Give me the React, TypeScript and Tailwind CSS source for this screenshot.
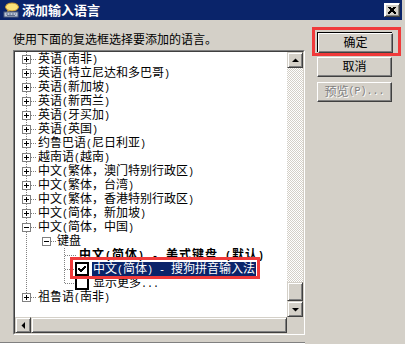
import type { ReactNode } from "react"

type Row = {
  text: string
  kind: "l1" | "l1open" | "l1last" | "l2open" | "l3bold" | "l3check"
  checked?: boolean
  selected?: boolean
  last3?: boolean
}

const rows: Row[] = [
  { text: "英语(南非)", kind: "l1" },
  { text: "英语(特立尼达和多巴哥)", kind: "l1" },
  { text: "英语(新加坡)", kind: "l1" },
  { text: "英语(新西兰)", kind: "l1" },
  { text: "英语(牙买加)", kind: "l1" },
  { text: "英语(英国)", kind: "l1" },
  { text: "约鲁巴语(尼日利亚)", kind: "l1" },
  { text: "越南语(越南)", kind: "l1" },
  { text: "中文(繁体，澳门特别行政区)", kind: "l1" },
  { text: "中文(繁体，台湾)", kind: "l1" },
  { text: "中文(繁体，香港特别行政区)", kind: "l1" },
  { text: "中文(简体，新加坡)", kind: "l1" },
  { text: "中文(简体，中国)", kind: "l1open" },
  { text: "键盘", kind: "l2open" },
  { text: "中文(简体) - 美式键盘 (默认)", kind: "l3bold" },
  { text: "中文(简体) - 搜狗拼音输入法", kind: "l3check", checked: true, selected: true },
  { text: "显示更多...", kind: "l3check", checked: false, last3: true },
  { text: "祖鲁语(南非)", kind: "l1last" },
]

// x positions inside the tree area (tree starts at page x=15)
const L1 = 11.5
const L2 = 31.5
const L3 = 49.5

// ASCII runs are set in a 6px-wide mono face, like the half-width bitmap font of the dialog
function Half({ text }: { text: string }) {
  const parts = text.match(/[\x20-\x7e]+|[^\x20-\x7e]+/g) ?? []
  return (
    <>
      {parts.map((p, i) =>
        /^[\x20-\x7e]/.test(p) ? (
          <span key={i} className="font-['Liberation_Mono',monospace] text-[10px] whitespace-pre">
            {p}
          </span>
        ) : (
          <span key={i}>{p}</span>
        ),
      )}
    </>
  )
}

function Box({ cx, open }: { cx: number; open: boolean }) {
  return (
    <g>
      <rect x={cx - 4} y={3.5} width={8} height={8} fill="#fff" stroke="#808080" />
      <line x1={cx - 2.5} y1={7.5} x2={cx + 2.5} y2={7.5} stroke="#000" />
      {!open && <line x1={cx} y1={5} x2={cx} y2={10} stroke="#000" />}
    </g>
  )
}

function Dots({ x1, y1, x2, y2 }: { x1: number; y1: number; x2: number; y2: number }) {
  return <line x1={x1} y1={y1} x2={x2} y2={y2} stroke="#808080" strokeDasharray="1 1" />
}

function CheckBox({ checked }: { checked: boolean }) {
  return (
    <g>
      <rect x={61} y={1} width={12} height={12} fill="#fff" stroke="#000" strokeWidth={2} />
      {checked && <path d="M63.5 6.5 L66 9 L70.5 4.5" fill="none" stroke="#000" strokeWidth={1.8} />}
    </g>
  )
}

function Gutter({ row }: { row: Row }) {
  let width = 23
  const parts: ReactNode[] = []
  const vEnd = row.kind === "l1last" ? 8 : 14
  parts.push(<Dots key="v1" x1={L1} y1={0} x2={L1} y2={vEnd} />)
  if (row.kind === "l1" || row.kind === "l1open" || row.kind === "l1last") {
    parts.push(<Dots key="h1" x1={16} y1={7.5} x2={21} y2={7.5} />)
    parts.push(<Box key="b1" cx={L1} open={row.kind === "l1open"} />)
  }
  if (row.kind === "l2open") {
    width = 42
    parts.push(<Dots key="h2" x1={36} y1={7.5} x2={41} y2={7.5} />)
    parts.push(<Box key="b2" cx={L2} open />)
  }
  if (row.kind === "l3bold" || row.kind === "l3check") {
    parts.push(<Dots key="v3" x1={L3} y1={0} x2={L3} y2={row.last3 ? 8 : 14} />)
    if (row.kind === "l3bold") {
      width = 64
      parts.push(<Dots key="h3" x1={50} y1={7.5} x2={61} y2={7.5} />)
    } else {
      width = 78
      parts.push(<Dots key="h3" x1={50} y1={7.5} x2={59} y2={7.5} />)
      parts.push(<CheckBox key="cb" checked={!!row.checked} />)
    }
  }
  return (
    <svg width={width} height={14} className="shrink-0" shapeRendering="crispEdges">
      {parts}
    </svg>
  )
}

function Arrow({ dir }: { dir: "up" | "down" | "left" }) {
  const d =
    dir === "up" ? "M4 9 L11 9 L7.5 5.5 Z" : dir === "down" ? "M4 6 L11 6 L7.5 9.5 Z" : "M9 4 L9 11 L5.5 7.5 Z"
  return (
    <svg width={14} height={14}>
      <path d={d} fill="#000" />
    </svg>
  )
}

const raised =
  "border border-t-[#d4d0c8] border-l-[#d4d0c8] border-r-[#404040] border-b-[#404040] shadow-[inset_1px_1px_#fff,inset_-1px_-1px_#808080] bg-[#d4d0c8]"

const button =
  "w-[75px] h-[20px] flex items-center justify-center text-[12px] leading-none border border-t-white border-l-white border-r-[#404040] border-b-[#404040] shadow-[inset_-1px_-1px_#808080] bg-[#d4d0c8]"

export default function App() {
  return (
    <div className="w-[405px] h-[344px] bg-[#d4d0c8] overflow-hidden relative font-['Liberation_Sans','Noto_Sans_CJK_SC',sans-serif] text-black">
      {/* title bar */}
      <div className="w-[402px] h-[20px] bg-[#0a246a] flex items-center">
        <svg width={16} height={16} className="ml-[3px]" viewBox="0 0 16 16">
          <ellipse cx={9} cy={5} rx={6.5} ry={4} fill="#fbe27a" stroke="#c8962a" />
          <path d="M5 8 L4 10 L7 9 Z" fill="#fbe27a" stroke="#c8962a" strokeWidth={0.6} />
          <rect x={1} y={10} width={14} height={5} fill="#b9c4d6" stroke="#4a5a7a" />
          <path d="M3 12h2M6 12h2M9 12h2M12 12h1M4 13.5h8" stroke="#4a5a7a" strokeWidth={0.8} />
        </svg>
        <span className="ml-[3px] text-white font-bold text-[13px] leading-none">添加输入语言</span>
        <div className={`ml-auto mr-[2px] w-[16px] h-[14px] flex items-center justify-center ${raised} border-t-white border-l-white`}>
          <svg width={8} height={7} shapeRendering="crispEdges">
            <path d="M0.5 0 L7.5 7 M1.5 0 L8.5 7 M7.5 0 L0.5 7 M6.5 0 L-0.5 7" stroke="#000" />
          </svg>
        </div>
      </div>

      <div className="flex">
        {/* left column */}
        <div className="pl-[13px] w-[305px]">
          <div className="mt-[13px] h-[14px] leading-[14px] text-[12px] whitespace-nowrap">
            使用下面的复选框选择要添加的语言。
          </div>
          <div className="mt-[3px] w-[292px] h-[285px] border border-t-[#808080] border-l-[#808080] border-r-white border-b-white">
            <div className="w-full h-full border border-t-[#404040] border-l-[#404040] border-r-[#d4d0c8] border-b-[#d4d0c8] bg-white flex flex-col">
              <div className="flex h-[265px]">
                {/* tree */}
                <div className="w-[272px] overflow-hidden">
                  <div className="flex flex-col">
                    {rows.map((row) => (
                      <div key={row.text} className="h-[14px] flex items-center whitespace-nowrap text-[12px] leading-[14px]">
                        <Gutter row={row} />
                        {row.selected ? (
                          <span className="-ml-px px-px block h-[14px] bg-[#0a246a] text-white">
                            <Half text={row.text} />
                          </span>
                        ) : (
                          <span className={`block h-[14px] ${row.kind === "l3bold" ? "font-bold tracking-[1px]" : ""}`}>
                            <Half text={row.text} />
                          </span>
                        )}
                      </div>
                    ))}
                  </div>
                </div>
                {/* vertical scrollbar */}
                <div className="w-[16px] flex flex-col">
                  <div className={`h-[16px] flex items-center justify-center ${raised}`}>
                    <Arrow dir="up" />
                  </div>
                  <div className="flex-1 bg-[repeating-conic-gradient(#d4d0c8_0%_25%,#ffffff_0%_50%)] bg-[length:2px_2px]" />
                  <div className={`h-[19px] ${raised}`} />
                  <div className={`h-[16px] flex items-center justify-center ${raised}`}>
                    <Arrow dir="down" />
                  </div>
                </div>
              </div>
              {/* horizontal scrollbar */}
              <div className="flex h-[16px] bg-[#d4d0c8]">
                <div className={`w-[16px] flex items-center justify-center ${raised}`}>
                  <Arrow dir="left" />
                </div>
                <div className={`w-[256px] ${raised}`} />
                <div className="w-[16px] bg-[#d4d0c8]" />
              </div>
            </div>
          </div>
          <div className="mt-[7px] -ml-[13px] w-[305px] h-[2px] border-t border-t-[#808080] border-b border-b-white" />
        </div>

        {/* right column: buttons */}
        <div className="ml-[12px] mt-[12px] flex flex-col gap-[5px]">
          <div className="w-[75px] h-[20px] border border-black">
            <div className={`${button} w-[73px] h-[18px]`}>确定</div>
          </div>
          <div className={button}>取消</div>
          <div className={`${button} text-[#808080] [text-shadow:1px_1px_0_#fff]`}>
            <Half text="预览(P)..." />
          </div>
        </div>
      </div>

      {/* red annotation boxes */}
      <div className="absolute left-[312px] top-[27px] w-[89px] h-[29px] border-[3px] border-[#f03a3a]" />
      <div className="absolute left-[70px] top-[257px] w-[190px] h-[22px] border-[3px] border-[#f03a3a]" />
    </div>
  )
}
